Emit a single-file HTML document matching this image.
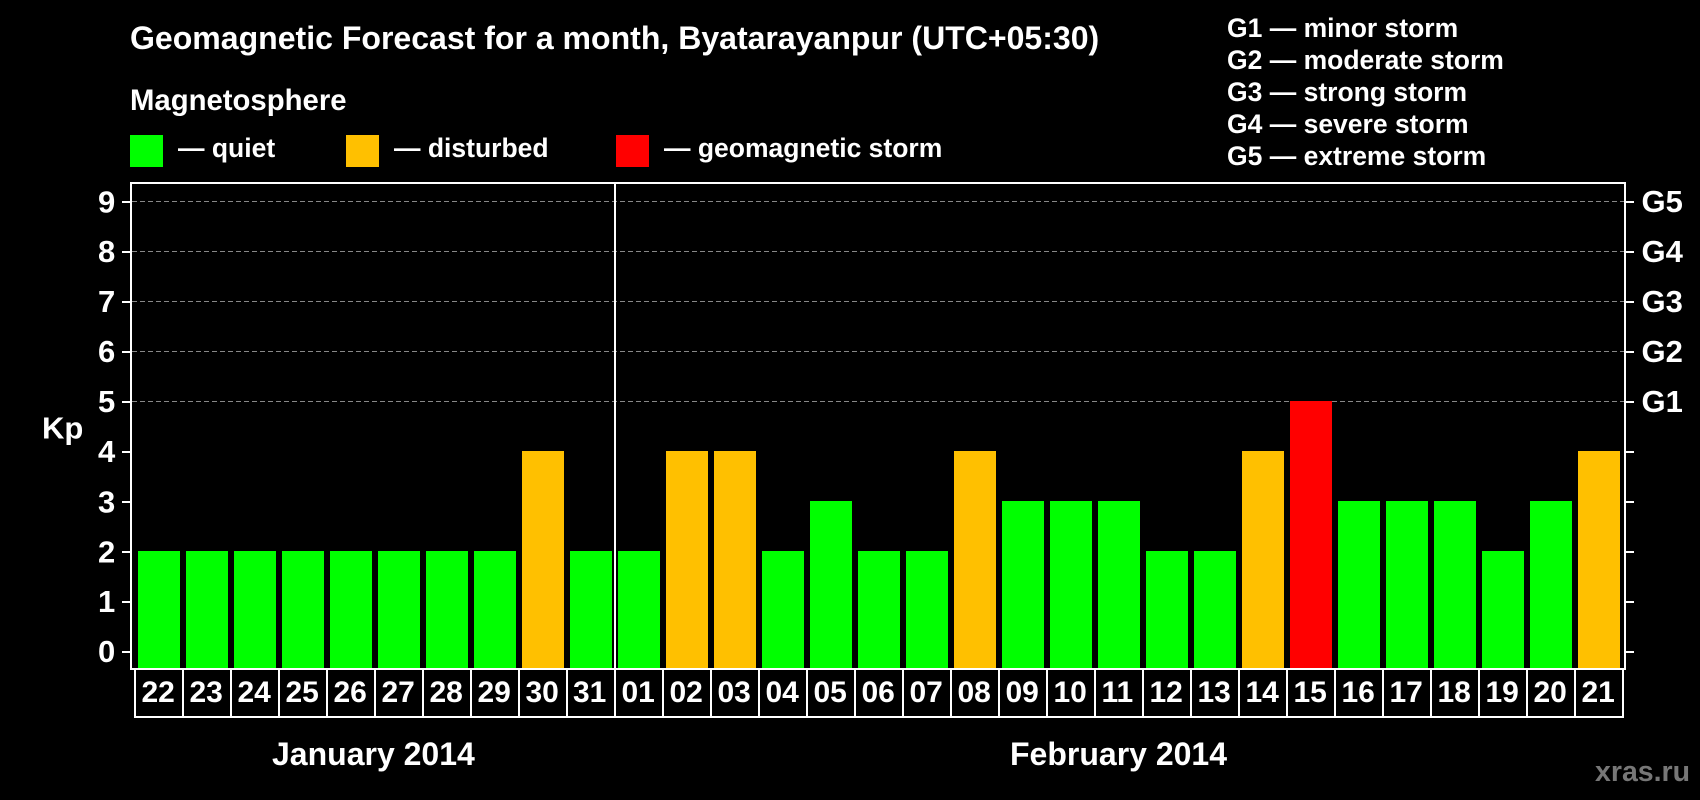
<!DOCTYPE html>
<html><head><meta charset="utf-8"><title>Geomagnetic Forecast</title>
<style>
html,body{margin:0;padding:0;background:#000;width:1700px;height:800px;overflow:hidden}
svg{display:block}
text{font-family:"Liberation Sans",Arial,sans-serif;font-weight:bold;fill:#fff}
.l{font-size:26.5px}.n{font-size:31px}.d{font-size:30px}.m{font-size:32px}
</style></head><body>
<svg width="1700" height="800" viewBox="0 0 1700 800" xmlns="http://www.w3.org/2000/svg">
<rect width="1700" height="800" fill="#000"/>
<text x="130" y="49" style="font-size:32.04px">Geomagnetic Forecast for a month, Byatarayanpur (UTC+05:30)</text>
<text x="130" y="110" style="font-size:29.3px">Magnetosphere</text>
<g shape-rendering="crispEdges">
<rect x="130" y="135" width="33" height="32" fill="#0f0"/>
<rect x="346" y="135" width="33" height="32" fill="#ffc000"/>
<rect x="616" y="135" width="33" height="32" fill="#f00"/>
</g>
<text x="178" y="157" class="l">— quiet</text>
<text x="394" y="157" class="l">— disturbed</text>
<text x="664" y="157" class="l">— geomagnetic storm</text>
<text x="1227" y="37" class="l">G1 — minor storm</text>
<text x="1227" y="69" class="l">G2 — moderate storm</text>
<text x="1227" y="101" class="l">G3 — strong storm</text>
<text x="1227" y="133" class="l">G4 — severe storm</text>
<text x="1227" y="165" class="l">G5 — extreme storm</text>

<g stroke="#888" stroke-width="1" stroke-dasharray="5 3" shape-rendering="crispEdges">
<line x1="132" x2="1624" y1="201.5" y2="201.5"/>
<line x1="132" x2="1624" y1="251.5" y2="251.5"/>
<line x1="132" x2="1624" y1="301.5" y2="301.5"/>
<line x1="132" x2="1624" y1="351.5" y2="351.5"/>
<line x1="132" x2="1624" y1="401.5" y2="401.5"/>
</g>

<g shape-rendering="crispEdges">
<rect x="138" y="551" width="42" height="117" fill="#0f0"/>
<rect x="186" y="551" width="42" height="117" fill="#0f0"/>
<rect x="234" y="551" width="42" height="117" fill="#0f0"/>
<rect x="282" y="551" width="42" height="117" fill="#0f0"/>
<rect x="330" y="551" width="42" height="117" fill="#0f0"/>
<rect x="378" y="551" width="42" height="117" fill="#0f0"/>
<rect x="426" y="551" width="42" height="117" fill="#0f0"/>
<rect x="474" y="551" width="42" height="117" fill="#0f0"/>
<rect x="522" y="451" width="42" height="217" fill="#ffc000"/>
<rect x="570" y="551" width="42" height="117" fill="#0f0"/>
<rect x="618" y="551" width="42" height="117" fill="#0f0"/>
<rect x="666" y="451" width="42" height="217" fill="#ffc000"/>
<rect x="714" y="451" width="42" height="217" fill="#ffc000"/>
<rect x="762" y="551" width="42" height="117" fill="#0f0"/>
<rect x="810" y="501" width="42" height="167" fill="#0f0"/>
<rect x="858" y="551" width="42" height="117" fill="#0f0"/>
<rect x="906" y="551" width="42" height="117" fill="#0f0"/>
<rect x="954" y="451" width="42" height="217" fill="#ffc000"/>
<rect x="1002" y="501" width="42" height="167" fill="#0f0"/>
<rect x="1050" y="501" width="42" height="167" fill="#0f0"/>
<rect x="1098" y="501" width="42" height="167" fill="#0f0"/>
<rect x="1146" y="551" width="42" height="117" fill="#0f0"/>
<rect x="1194" y="551" width="42" height="117" fill="#0f0"/>
<rect x="1242" y="451" width="42" height="217" fill="#ffc000"/>
<rect x="1290" y="401" width="42" height="267" fill="#f00"/>
<rect x="1338" y="501" width="42" height="167" fill="#0f0"/>
<rect x="1386" y="501" width="42" height="167" fill="#0f0"/>
<rect x="1434" y="501" width="42" height="167" fill="#0f0"/>
<rect x="1482" y="551" width="42" height="117" fill="#0f0"/>
<rect x="1530" y="501" width="42" height="167" fill="#0f0"/>
<rect x="1578" y="451" width="42" height="217" fill="#ffc000"/>
</g>

<g fill="#fff" shape-rendering="crispEdges">
<rect x="130" y="182" width="1496" height="2"/>
<rect x="130" y="668" width="1496" height="2"/>
<rect x="130" y="182" width="2" height="488"/>
<rect x="1624" y="182" width="2" height="488"/>
<rect x="614" y="184" width="2" height="484"/>
<rect x="122" y="201" width="8" height="2"/><rect x="122" y="251" width="8" height="2"/>
<rect x="122" y="301" width="8" height="2"/><rect x="122" y="351" width="8" height="2"/>
<rect x="122" y="401" width="8" height="2"/><rect x="122" y="451" width="8" height="2"/>
<rect x="122" y="501" width="8" height="2"/><rect x="122" y="551" width="8" height="2"/>
<rect x="122" y="601" width="8" height="2"/><rect x="122" y="651" width="8" height="2"/>
<rect x="1626" y="201" width="8" height="2"/><rect x="1626" y="251" width="8" height="2"/>
<rect x="1626" y="301" width="8" height="2"/><rect x="1626" y="351" width="8" height="2"/>
<rect x="1626" y="401" width="8" height="2"/><rect x="1626" y="451" width="8" height="2"/>
<rect x="1626" y="501" width="8" height="2"/><rect x="1626" y="551" width="8" height="2"/>
<rect x="1626" y="601" width="8" height="2"/><rect x="1626" y="651" width="8" height="2"/>
<rect x="134" y="716" width="1490" height="2"/>
<rect x="134" y="670" width="2" height="48"/><rect x="182" y="670" width="2" height="48"/>
<rect x="230" y="670" width="2" height="48"/><rect x="278" y="670" width="2" height="48"/>
<rect x="326" y="670" width="2" height="48"/><rect x="374" y="670" width="2" height="48"/>
<rect x="422" y="670" width="2" height="48"/><rect x="470" y="670" width="2" height="48"/>
<rect x="518" y="670" width="2" height="48"/><rect x="566" y="670" width="2" height="48"/>
<rect x="614" y="670" width="2" height="48"/><rect x="662" y="670" width="2" height="48"/>
<rect x="710" y="670" width="2" height="48"/><rect x="758" y="670" width="2" height="48"/>
<rect x="806" y="670" width="2" height="48"/><rect x="854" y="670" width="2" height="48"/>
<rect x="902" y="670" width="2" height="48"/><rect x="950" y="670" width="2" height="48"/>
<rect x="998" y="670" width="2" height="48"/><rect x="1046" y="670" width="2" height="48"/>
<rect x="1094" y="670" width="2" height="48"/><rect x="1142" y="670" width="2" height="48"/>
<rect x="1190" y="670" width="2" height="48"/><rect x="1238" y="670" width="2" height="48"/>
<rect x="1286" y="670" width="2" height="48"/><rect x="1334" y="670" width="2" height="48"/>
<rect x="1382" y="670" width="2" height="48"/><rect x="1430" y="670" width="2" height="48"/>
<rect x="1478" y="670" width="2" height="48"/><rect x="1526" y="670" width="2" height="48"/>
<rect x="1574" y="670" width="2" height="48"/><rect x="1622" y="670" width="2" height="48"/>
</g>

<text class="n" x="98" y="212.5">9</text>
<text class="n" x="98" y="262">8</text>
<text class="n" x="98" y="312">7</text>
<text class="n" x="98" y="362">6</text>
<text class="n" x="98" y="412">5</text>
<text class="n" x="98" y="462">4</text>
<text class="n" x="98" y="512.5">3</text>
<text class="n" x="98" y="562.5">2</text>
<text class="n" x="98" y="612">1</text>
<text class="n" x="98" y="662">0</text>
<text class="n" x="42" y="438.5">Kp</text>
<text class="n" x="1641.5" y="212">G5</text>
<text class="n" x="1641.5" y="262">G4</text>
<text class="n" x="1641.5" y="312">G3</text>
<text class="n" x="1641.5" y="362">G2</text>
<text class="n" x="1641.5" y="412">G1</text>

<text class="d" x="141.5" y="702">22</text>
<text class="d" x="189.5" y="702">23</text>
<text class="d" x="237.5" y="702">24</text>
<text class="d" x="285.5" y="702">25</text>
<text class="d" x="333.5" y="702">26</text>
<text class="d" x="381.5" y="702">27</text>
<text class="d" x="429.5" y="702">28</text>
<text class="d" x="477.5" y="702">29</text>
<text class="d" x="525.5" y="702">30</text>
<text class="d" x="573" y="702">31</text>
<text class="d" x="621.5" y="702">01</text>
<text class="d" x="669.5" y="702">02</text>
<text class="d" x="717.5" y="702">03</text>
<text class="d" x="765.5" y="702">04</text>
<text class="d" x="813.5" y="702">05</text>
<text class="d" x="861.5" y="702">06</text>
<text class="d" x="909.5" y="702">07</text>
<text class="d" x="957.5" y="702">08</text>
<text class="d" x="1005.5" y="702">09</text>
<text class="d" x="1053.5" y="702">10</text>
<text class="d" x="1101.5" y="702">11</text>
<text class="d" x="1149.5" y="702">12</text>
<text class="d" x="1197.5" y="702">13</text>
<text class="d" x="1245.5" y="702">14</text>
<text class="d" x="1293.5" y="702">15</text>
<text class="d" x="1341.5" y="702">16</text>
<text class="d" x="1389.5" y="702">17</text>
<text class="d" x="1437.5" y="702">18</text>
<text class="d" x="1485.5" y="702">19</text>
<text class="d" x="1533.5" y="702">20</text>
<text class="d" x="1581.5" y="702">21</text>

<text class="m" x="272" y="765">January 2014</text>
<text class="m" x="1010" y="765">February 2014</text>
<text x="1595" y="781" style="font-size:28.5px;fill:#777">xras.ru</text>
</svg>
</body></html>
